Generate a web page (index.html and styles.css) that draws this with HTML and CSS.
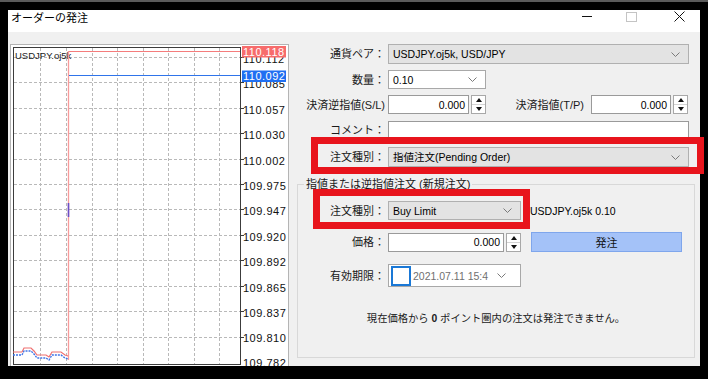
FILE: index.html
```html
<!DOCTYPE html>
<html lang="ja">
<head>
    <meta charset="UTF-8">
    <title>オーダーの発注</title>
    <link rel="stylesheet" href="styles.css">
</head>
<body>
    <div class="topstrip"></div>
    <div class="window">
        <div class="titlebar">
            <span class="title">オーダーの発注</span>
            <div class="winbtns">
                <span class="wbtn"><span class="ico-min"></span></span>
                <span class="wbtn"><span class="ico-max"></span></span>
                <span class="wbtn close">
                    <svg width="11" height="11" viewBox="0 0 11 11"><path d="M0.5 0.5 L10.5 10.5 M10.5 0.5 L0.5 10.5" stroke="#111" stroke-width="1" fill="none"/></svg>
                </span>
            </div>
        </div>

        <div class="body">
            <div class="chart">
                <svg width="280" height="322" viewBox="0 0 280 322">
                    <rect x="0.5" y="0.5" width="278" height="340" fill="#fff" stroke="#b4b4b4"/>
                    <!-- grid -->
                    <g stroke="#b9b9b9" stroke-dasharray="3 2" stroke-width="1">
                        <path d="M4 13.5H230 M4 38.5H230 M4 64.5H230 M4 89.5H230 M4 115.5H230 M4 140.5H230 M4 165.5H230 M4 191.5H230 M4 216.5H230 M4 242.5H230 M4 267.5H230 M4 293.5H230"/>
                        <path d="M30.5 4V320 M56.5 4V320 M82.5 4V320 M107.5 4V320 M133.5 4V320 M158.5 4V320 M184.5 4V320 M209.5 4V320"/>
                    </g>
                    <rect x="3.5" y="3.5" width="227" height="317" fill="none" stroke="#3c3c3c"/>
                    <!-- axis ticks -->
                    <g stroke="#3c3c3c">
                        <path d="M231 13.5H234 M231 38.5H234 M231 64.5H234 M231 89.5H234 M231 115.5H234 M231 140.5H234 M231 165.5H234 M231 191.5H234 M231 216.5H234 M231 242.5H234 M231 267.5H234 M231 293.5H234"/>
                    </g>
                    <g class="axis">
                        <text x="233" y="19">110.112</text>
                        <text x="233" y="44">110.085</text>
                        <text x="233" y="70">110.057</text>
                        <text x="233" y="95">110.030</text>
                        <text x="233" y="121">110.002</text>
                        <text x="233" y="146">109.975</text>
                        <text x="233" y="171">109.947</text>
                        <text x="233" y="197">109.920</text>
                        <text x="233" y="222">109.892</text>
                        <text x="233" y="248">109.865</text>
                        <text x="233" y="273">109.837</text>
                        <text x="233" y="298">109.810</text>
                        <text x="233" y="323">109.782</text>
                    </g>
                    <text class="sym" x="5" y="15">USDJPY.oj5k</text>
                    <!-- ask / bid lines -->
                    <path d="M59 7.5H230" stroke="#f47c7c" stroke-width="1"/>
                    <path d="M58.5 7V316" stroke="#f79a9a" stroke-width="1.3"/>
                    <path d="M59 31.5H230" stroke="#2f74ea" stroke-width="1"/>
                    <path d="M58.5 159V173" stroke="#6a4fc8" stroke-width="1.6"/>
                    <polyline points="3,308 12,308 14,304 21,304 24,307 27,311 36,311 39,313 42,308 51,308 55,311 58,312" fill="none" stroke="#f07070" stroke-width="1.2"/>
                    <polyline points="3,311 12,311 14,307 21,307 24,310 27,314 36,314 39,316 42,311 51,311 55,314 58,315" fill="none" stroke="#3f74e6" stroke-width="1.4" stroke-dasharray="2 1"/>
                    <!-- price labels -->
                    <rect x="232" y="2" width="44" height="11.5" fill="#f76c6c"/>
                    <text class="tag" x="233" y="11.5">110.118</text>
                    <rect x="232" y="26.5" width="44" height="11.5" fill="#1f6ff2"/>
                    <text class="tag" x="233" y="36">110.092</text>
                </svg>
            </div>

            <div class="form">
                <div class="row r1">
                    <label class="lbl">通貨ペア：</label>
                    <div class="combo grey w-full"><span class="val">USDJPY.oj5k, USD/JPY</span>
                        <svg class="chev" width="9" height="5" viewBox="0 0 9 5"><polyline points="0.5,0.5 4.5,4.5 8.5,0.5" fill="none" stroke="#7a7a7a"/></svg>
                    </div>
                </div>
                <div class="row r2">
                    <label class="lbl">数量：</label>
                    <div class="combo white w-lot"><span class="val">0.10</span>
                        <svg class="chev" width="9" height="5" viewBox="0 0 9 5"><polyline points="0.5,0.5 4.5,4.5 8.5,0.5" fill="none" stroke="#7a7a7a"/></svg>
                    </div>
                </div>
                <div class="row r3">
                    <label class="lbl">決済逆指値<small>(S/L)</small></label>
                    <div class="spinbox">
                        <div class="field w-sl"><span class="val">0.000</span></div>
                        <span class="spin"><i class="up"></i><i class="dn"></i></span>
                    </div>
                    <label class="lbl2">決済指値<small>(T/P)</small></label>
                    <div class="spinbox">
                        <div class="field w-tp"><span class="val">0.000</span></div>
                        <span class="spin"><i class="up"></i><i class="dn"></i></span>
                    </div>
                </div>
                <div class="row r4">
                    <label class="lbl">コメント：</label>
                    <div class="field w-full"></div>
                </div>
                <div class="row r5">
                    <label class="lbl">注文種別：</label>
                    <div class="combo grey w-full"><span class="val">指値注文(Pending Order)</span>
                        <svg class="chev" width="9" height="5" viewBox="0 0 9 5"><polyline points="0.5,0.5 4.5,4.5 8.5,0.5" fill="none" stroke="#7a7a7a"/></svg>
                    </div>
                </div>

                <fieldset class="group">
                    <legend>指値または逆指値注文 (新規注文)</legend>
                    <div class="row g1">
                        <label class="lbl">注文種別：</label>
                        <div class="combo grey w-type"><span class="val">Buy Limit</span>
                            <svg class="chev" width="9" height="5" viewBox="0 0 9 5"><polyline points="0.5,0.5 4.5,4.5 8.5,0.5" fill="none" stroke="#7a7a7a"/></svg>
                        </div>
                        <span class="val info">USDJPY.oj5k 0.10</span>
                    </div>
                    <div class="row g2">
                        <label class="lbl">価格：</label>
                        <div class="spinbox">
                            <div class="field w-price"><span class="val">0.000</span></div>
                            <span class="spin"><i class="up"></i><i class="dn"></i></span>
                        </div>
                        <button class="send">発注</button>
                    </div>
                    <div class="row g3">
                        <label class="lbl">有効期限：</label>
                        <div class="datepick">
                            <span class="check"></span>
                            <span class="val date">2021.07.11 15:4</span>
                            <svg class="chev" width="9" height="5" viewBox="0 0 9 5"><polyline points="0.5,0.5 4.5,4.5 8.5,0.5" fill="none" stroke="#7a7a7a"/></svg>
                        </div>
                    </div>
                    <p class="notice">現在価格から <b>0</b> ポイント圏内の注文は発注できません。</p>
                </fieldset>
            </div>
        </div>
    </div>

    <!-- highlight frames drawn over the screenshot -->
    <div class="mark mark-type"></div>
    <div class="mark mark-order"></div>
</body>
</html>
```

FILE: styles.css
```css
body {
    margin: 0;
    background-color: #000;
    font-family: "Liberation Sans", "Noto Sans CJK JP", sans-serif;
    font-size: 11px;
    line-height: 14px;
    color: #1a1a1a;
}
.topstrip {
    height: 2px;
    background-color: #5a5a5a;
}
.window {
    margin: 8px 8px 0;
    height: 356px;
    background-color: #f0f0f0;
    overflow: hidden;
}

/* title bar */
.titlebar {
    height: 22px;
    background-color: #fff;
    display: flex;
    align-items: flex-start;
}
.title {
    padding: 1px 0 0 3px;
    color: #000;
    font-size: 11px;
}
.winbtns {
    margin-left: auto;
    display: flex;
    padding-top: 1px;
}
.wbtn {
    width: 45px;
    height: 11px;
    display: flex;
    align-items: center;
    justify-content: center;
}
.wbtn.close {
    width: 42px;
    padding-left: 4px;
}
.ico-min {
    width: 10px;
    height: 1px;
    background-color: #111;
}
.ico-max {
    width: 9px;
    height: 8px;
    border: 1px solid #c4c4c4;
}

/* main area */
.body {
    display: flex;
    height: 334px;
}
.chart {
    margin: 12px 0 0 2px;
    width: 280px;
    height: 322px;
}
.chart svg {
    display: block;
}
.axis text {
    font-family: "Liberation Sans", sans-serif;
    font-size: 11px;
    letter-spacing: 0.5px;
    fill: #111;
}
.tag {
    font-family: "Liberation Sans", sans-serif;
    font-size: 11px;
    letter-spacing: 0.5px;
    fill: #fff;
}
.sym {
    font-family: "Liberation Sans", sans-serif;
    font-size: 9.5px;
    fill: #222;
}

/* order form */
.form {
    margin-left: 7px;
    width: 398px;
    padding-top: 12px;
    display: flex;
    flex-direction: column;
}
.row {
    display: flex;
    align-items: center;
}
.lbl {
    width: 88px;
    margin-right: 3px;
    text-align: right;
    white-space: nowrap;
    flex-shrink: 0;
}
.lbl small, .lbl2 small {
    font-size: 11px;
}
.lbl2 {
    width: 98px;
    margin-right: 7px;
    text-align: right;
    white-space: nowrap;
}
.val {
    font-size: 10.5px;
    color: #000;
}
.r2 { margin-top: 6px; }
.r3 { margin-top: 6px; }
.r4 { margin-top: 7px; }
.r5 { margin-top: 8px; }

.combo, .field, .datepick {
    box-sizing: border-box;
    display: flex;
    align-items: center;
    padding-left: 4px;
}
.combo {
    height: 20px;
}
.combo.grey {
    background-color: #e3e3e3;
    border: 1px solid #b0b0b0;
}
.combo.white {
    background-color: #fff;
    border: 1px solid #a8a8a8;
}
.chev {
    margin-left: auto;
    margin-right: 8px;
}
.field {
    height: 19px;
    background-color: #fff;
    border: 1px solid #9a9a9a;
    justify-content: flex-end;
    padding-right: 3px;
}
.w-full { width: 301px; }
.w-lot { width: 98px; height: 19px; }
.w-sl { width: 81px; }
.w-tp { width: 80px; }
.w-type { width: 133px; height: 19px; }
.w-price { width: 116px; }
.r4 .field { height: 18px; }

.spinbox {
    display: flex;
    align-items: stretch;
}
.spin {
    width: 15px;
    height: 19px;
    margin-left: 2px;
    box-sizing: border-box;
    border: 1px solid #a8a8a8;
    background-color: #fff;
    display: flex;
    flex-direction: column;
}
.spin i {
    flex: 1;
    display: flex;
    align-items: center;
    justify-content: center;
}
.spin .up {
    border-bottom: 1px solid #d4d4d4;
}
.spin .up::before {
    content: "";
    border-left: 3.5px solid transparent;
    border-right: 3.5px solid transparent;
    border-bottom: 4px solid #111;
}
.spin .dn::before {
    content: "";
    border-left: 3.5px solid transparent;
    border-right: 3.5px solid transparent;
    border-top: 4px solid #111;
}

/* group box */
.group {
    margin: 10px 0 0;
    padding: 0;
    border: 1px solid #d8d8d8;
    height: 181px;
    box-sizing: border-box;
    min-width: 0;
}
.group legend {
    margin-left: 6px;
    padding: 0 2px;
    line-height: 14px;
}
.group .lbl {
    width: 87px;
}
.g1 { margin-top: 10px; }
.g2 { margin-top: 12px; }
.g3 { margin-top: 12px; }
.info {
    margin-left: 9px;
}
.send {
    margin-left: 10px;
    width: 151px;
    height: 20px;
    padding: 0;
    background-color: #a4c2f8;
    border: 1px solid #7fa6ec;
    font-family: "Noto Sans CJK JP", sans-serif;
    font-size: 11px;
    color: #111;
}
.datepick {
    width: 133px;
    height: 23px;
    background-color: #fff;
    border: 1px solid #a8a8a8;
    padding-left: 2px;
}
.check {
    width: 20px;
    height: 20px;
    box-sizing: border-box;
    border: 2px solid #1a78d6;
    background-color: #fff;
}
.date {
    margin-left: 2px;
    color: #707070;
}
.datepick .chev {
    margin-right: 14px;
}
.notice {
    margin: 25px 0 0;
    text-align: center;
    font-size: 10.3px;
}
.notice b {
    font-family: "Liberation Sans", sans-serif;
    font-weight: bold;
}

/* red highlight frames */
.mark {
    position: absolute;
    box-sizing: border-box;
    border: 7px solid #e8141c;
}
.mark-type {
    left: 311px;
    top: 137px;
    width: 393px;
    height: 37px;
}
.mark-order {
    left: 313px;
    top: 189px;
    width: 217px;
    height: 40px;
}
```
